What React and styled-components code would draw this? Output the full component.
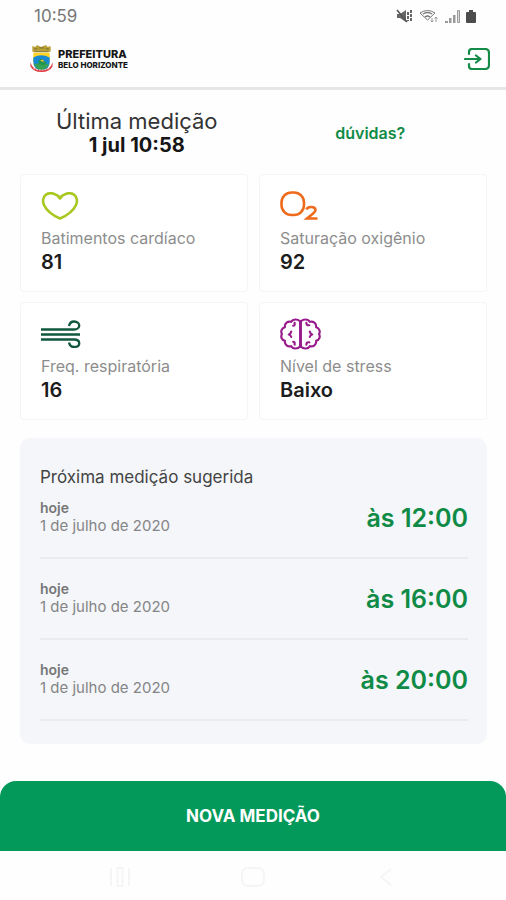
import React from "react";
import styled, { createGlobalStyle } from "styled-components";

const GlobalStyle = createGlobalStyle`
  * { box-sizing: border-box; }
  body {
    margin: 0;
    background: #fefefe;
    font-family: Inter, Roboto, sans-serif;
    color: #1c1c1c;
  }
  h1, h2, p, ul, dl, dd, dt { margin: 0; padding: 0; }
  svg { display: block; flex: none; }
`;

const Screen = styled.div`
  min-height: 100vh;
  display: flex;
  flex-direction: column;
`;

const StatusBar = styled.div`
  height: 32px;
  padding: 0 30px 0 34px;
  display: flex;
  align-items: center;
  justify-content: space-between;
  font-size: 17px;
  color: #777;
`;

const StatusIcons = styled.div`
  display: flex;
  align-items: center;
  gap: 6px;
`;

const Header = styled.header`
  height: 58px;
  padding: 0 16px 2px 29px;
  display: flex;
  align-items: center;
  justify-content: space-between;
  border-bottom: 3px solid #e6e6e6;
`;

const Brand = styled.div`
  display: flex;
  align-items: center;
  gap: 4px;
`;

const BrandName = styled.div`
  font-weight: 800;
  font-size: 11px;
  line-height: 12px;
  color: #161616;
`;

const BrandCity = styled.div`
  font-weight: 800;
  font-size: 8px;
  line-height: 10px;
  color: #161616;
`;

const IconButton = styled.button`
  border: 0;
  padding: 0;
  background: none;
  cursor: pointer;
`;

const Content = styled.main`
  flex: 1;
  padding: 19px 19px 0 20px;
`;

const Summary = styled.section`
  display: grid;
  grid-template-columns: 1fr 1fr;
  align-items: center;
  justify-items: center;
  height: 48px;
`;

const Latest = styled.h1`
  font-size: 22px;
  line-height: 24px;
  font-weight: 400;
  text-align: center;
  color: #333;
`;

const LatestTime = styled.strong`
  display: block;
  font-size: 20px;
  line-height: 24px;
  font-weight: 700;
  color: #161616;
`;

const HelpLink = styled.a`
  font-size: 16px;
  font-weight: 600;
  color: #0f8b46;
  text-decoration: none;
`;

const Cards = styled.dl`
  display: grid;
  grid-template-columns: 1fr 1fr;
  gap: 10px 11px;
  margin-top: 17px;
`;

const Card = styled.div`
  height: 118px;
  padding: 11px 20px;
  border: 1px solid #f5f5f5;
  border-radius: 4px;
  background: #fff;
`;

const CardIcon = styled.div`
  height: 40px;
  display: flex;
  align-items: center;
`;

const CardLabel = styled.dt`
  font-size: 16px;
  line-height: 24px;
  color: #8d8d8d;
`;

const CardValue = styled.dd`
  font-size: 20px;
  line-height: 24px;
  font-weight: 600;
  color: #1c1c1c;
`;

const Panel = styled.section`
  margin-top: 18px;
  padding: 28px 19px 23px 20px;
  border-radius: 10px;
  background: #f4f6fa;
`;

const PanelTitle = styled.h2`
  font-size: 17px;
  line-height: 22px;
  font-weight: 400;
  color: #444;
`;

const Schedule = styled.ul`
  list-style: none;
  margin-top: -10px;
`;

const Slot = styled.li`
  height: 81px;
  padding-bottom: 22px;
  display: flex;
  justify-content: space-between;
  align-items: flex-end;
  border-bottom: 2px solid #e9ebef;
`;

const SlotDay = styled.p`
  font-size: 15px;
  line-height: 18px;
  color: #858585;
`;

const SlotToday = styled.strong`
  display: block;
  font-size: 14px;
  font-weight: 600;
  color: #777;
`;

const SlotTime = styled.span`
  font-size: 25px;
  line-height: 34px;
  font-weight: 600;
  color: #0f8b46;
`;

const PrimaryButton = styled.button`
  height: 70px;
  border: 0;
  border-radius: 16px 16px 0 0;
  background: #02995a;
  color: #fff;
  font-family: inherit;
  font-size: 17px;
  font-weight: 700;
  cursor: pointer;
`;

const NavBar = styled.nav`
  height: 49px;
  padding: 2px 54px 0;
  display: grid;
  grid-template-columns: repeat(3, 1fr);
  align-items: center;
  justify-items: center;
`;

function MutedIcon() {
  return (
    <svg width="17" height="14" viewBox="0 0 17 14" fill="none" stroke="#555" aria-hidden="true">
      <path d="M1 5h3l6-4v12l-6-4H1z" fill="#666" stroke="none" />
      <path d="M1 1l10 12" strokeWidth="1.6" />
      <path d="M12 3v9M15 1v12" strokeWidth="1.8" strokeDasharray="3 1" />
    </svg>
  );
}

function WifiIcon() {
  return (
    <svg width="20" height="14" viewBox="0 0 20 14" fill="none" stroke="#777" aria-hidden="true">
      <path d="M1 4Q8.500-1 16 4L8.500 11z" />
      <path d="M4 5q4.500-3 9 0M6 8q2.500-2 5 0" strokeWidth="1.400" />
      <path d="M13 9v4M11.500 11.500L13 13l1.500-1.500M17 13V8M15.500 9.500L17 8l1.500 1.500" stroke="#999" />
    </svg>
  );
}

function SignalIcon() {
  return (
    <svg width="15" height="13" viewBox="0 0 15 13" aria-hidden="true">
      <path d="M0 11h3v2H0zM4 8h2.500v5H4zM8 5h2.500v8H8z" fill="#999" />
      <path d="M12.500.5h2v12h-2z" fill="#ddd" stroke="#999" />
    </svg>
  );
}

function BatteryIcon() {
  return (
    <svg width="10" height="13" viewBox="0 0 10 13" aria-hidden="true">
      <path d="M3 0h4v2h2q1 0 1 1v9q0 1-1 1H1q-1 0-1-1V3q0-1 1-1h2z" fill="#4c4c4c" />
    </svg>
  );
}

function Crest() {
  return (
    <svg width="25" height="27" viewBox="0 0 25 28" aria-hidden="true">
      <path d="M3 1l3 1 2-2 4 2 5-2 2 2 3-1v6H3z" fill="#b9a036" />
      <path d="M5 4h3M10 3h5M17 4h3M5 7h15" stroke="#766c2e" />
      <path d="M4 8h17v9q0 8-8.500 10Q4 25 4 17z" fill="#ffd426" />
      <path d="M4 13q8-5 17 0v4q0 8-8.500 10Q4 25 4 17z" fill="#1789d3" />
      <path d="M5 20q7-2 15 0-2 5-7.500 6.500Q7 25 5 20z" fill="#35a354" />
      <path d="M9 17q3-5 5-1l4 2-3 3-5-1z" fill="#239350" />
      <path d="M11 16l3-1 1 3z" fill="#f1c52d" />
      <path d="M1 18q2 8 11.500 8T24 18v4q-3 6-11.500 6T1 22z" fill="#df3c40" />
      <path d="M4 24q8 4 17 0" fill="none" stroke="#fff" strokeWidth=".8" strokeDasharray="2 1" />
    </svg>
  );
}

function LoginIcon() {
  return (
    <svg width="26" height="22" viewBox="0 0 26 22" fill="none" stroke="#148b46" strokeWidth="2.2" strokeLinecap="round" strokeLinejoin="round" aria-hidden="true">
      <path d="M5 6V4q0-3 3-3h13q4 0 4 4v12q0 4-4 4H8q-3 0-3-3v-2" />
      <path d="M1 11h15M12 7.500l4.500 3.500-4.500 3.500" />
    </svg>
  );
}

function HeartIcon() {
  return (
    <svg width="38" height="28" viewBox="0 0 38 28" fill="none" stroke="#a8c81f" strokeWidth="2.6" strokeLinejoin="round" aria-hidden="true">
      <path d="M19 6.500C16 1.500 10 .2 6 2 2 4 1.200 9 3 13 6 19.500 12 23.500 19 26.500 26 23.500 32 19.500 35 13 36.800 9 36 4 32 2 28 .2 22 1.500 19 6.500z" />
    </svg>
  );
}

function OxygenIcon() {
  return (
    <svg width="39" height="30" viewBox="0 0 39 30" fill="none" stroke="#ee6b1c" aria-hidden="true">
      <rect x="1.500" y="1.500" width="22.500" height="22.500" rx="10" strokeWidth="2.600" />
      <path d="M26.500 18.500q1-2.500 4.500-2.500 4.500 0 4.500 3 0 1.500-3 4L27 27.500H37.500" strokeWidth="2.600" />
    </svg>
  );
}

function WindIcon() {
  return (
    <svg width="40" height="28" viewBox="0 0 40 28" fill="none" stroke="#10583d" strokeWidth="2.300" aria-hidden="true">
      <path d="M0 9.500h33c7 0 7-8 0-8q-4 0-5 4.500" />
      <path d="M0 14.500h39" />
      <path d="M0 19.500h33c7 0 7 7.500 0 7.500q-4 0-5-4.500" />
    </svg>
  );
}

function BrainIcon() {
  return (
    <svg width="41" height="32" viewBox="0 0 42 32" fill="none" stroke="#971b8c" strokeWidth="2.2" strokeLinecap="round" strokeLinejoin="round" aria-hidden="true">
      <path d="M21 3.500v25" strokeWidth="3" />
      <path d="M20.500 3C18 .5 13 .5 11.500 3.500 8 2.500 4.500 5 5 9 1.500 10 .5 13.500 2 16 .5 19 1.500 22 5 23 4.500 27 8 29.500 11.500 28.500 13 31.500 18 31.500 20.500 29M21.500 3C24 .5 29 .5 30.500 3.500 34 2.500 37.500 5 37 9c3.500 1 4.500 4.500 3 7 1.500 3 .5 6-3 7 .5 4-3 6.500-6.500 5.500C29 31.500 24 31.500 21.500 29" />
      <path d="M15 4.500v2q0 1-1.500 1M27 4.500q0 3 3 2.500M15 27v-2q0-1-1.500-1M27 27q0-3 3-2.500" />
      <path d="M11.500 13.500Q11 16 9 16.500q2 .5 2.500 2.500M30.500 13.500Q31 16 33 16.500q-2 .5-2.500 2.500" />
    </svg>
  );
}

function RecentsIcon() {
  return (
    <svg width="22" height="20" viewBox="0 0 22 20" fill="none" stroke="#f5f5f5" strokeWidth="2" aria-hidden="true">
      <path d="M2 1v18M20 1v18M8.500 1h5v18h-5z" />
    </svg>
  );
}

function HomeIcon() {
  return (
    <svg width="24" height="20" viewBox="0 0 24 20" fill="none" stroke="#f5f5f5" strokeWidth="2" aria-hidden="true">
      <rect x="1" y="1" width="22" height="18" rx="6" />
    </svg>
  );
}

function BackIcon() {
  return (
    <svg width="12" height="18" viewBox="0 0 12 18" fill="none" stroke="#f5f5f5" strokeWidth="2" aria-hidden="true">
      <path d="M11 1L1 9l10 8" />
    </svg>
  );
}

const readings = [
  { label: "Batimentos cardíaco", value: "81", Icon: HeartIcon },
  { label: "Saturação oxigênio", value: "92", Icon: OxygenIcon },
  { label: "Freq. respiratória", value: "16", Icon: WindIcon },
  { label: "Nível de stress", value: "Baixo", Icon: BrainIcon },
];

const slots = ["12:00", "16:00", "20:00"];

export default function App() {
  return (
    <Screen>
      <GlobalStyle />
      <StatusBar>
        <span>10:59</span>
        <StatusIcons>
          <MutedIcon />
          <WifiIcon />
          <SignalIcon />
          <BatteryIcon />
        </StatusIcons>
      </StatusBar>
      <Header>
        <Brand>
          <Crest />
          <div>
            <BrandName>PREFEITURA</BrandName>
            <BrandCity>BELO HORIZONTE</BrandCity>
          </div>
        </Brand>
        <IconButton type="button" aria-label="Sair">
          <LoginIcon />
        </IconButton>
      </Header>
      <Content>
        <Summary>
          <Latest>
            Última medição
            <LatestTime>1 jul 10:58</LatestTime>
          </Latest>
          <HelpLink href="#duvidas">dúvidas?</HelpLink>
        </Summary>
        <Cards>
          {readings.map(({ label, value, Icon }) => (
            <Card key={label}>
              <CardIcon>
                <Icon />
              </CardIcon>
              <CardLabel>{label}</CardLabel>
              <CardValue>{value}</CardValue>
            </Card>
          ))}
        </Cards>
        <Panel>
          <PanelTitle>Próxima medição sugerida</PanelTitle>
          <Schedule>
            {slots.map((time) => (
              <Slot key={time}>
                <SlotDay>
                  <SlotToday>hoje</SlotToday>
                  1 de julho de 2020
                </SlotDay>
                <SlotTime>às {time}</SlotTime>
              </Slot>
            ))}
          </Schedule>
        </Panel>
      </Content>
      <PrimaryButton type="button">NOVA MEDIÇÃO</PrimaryButton>
      <NavBar aria-label="Sistema">
        <IconButton type="button" aria-label="Recentes">
          <RecentsIcon />
        </IconButton>
        <IconButton type="button" aria-label="Início">
          <HomeIcon />
        </IconButton>
        <IconButton type="button" aria-label="Voltar">
          <BackIcon />
        </IconButton>
      </NavBar>
    </Screen>
  );
}
